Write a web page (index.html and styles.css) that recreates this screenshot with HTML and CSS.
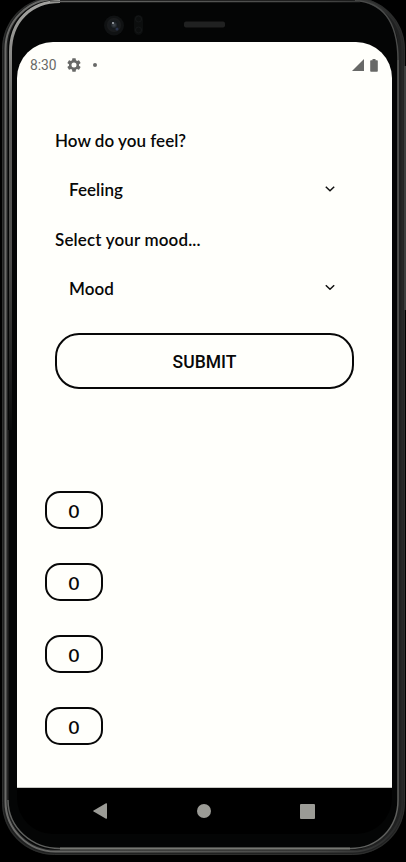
FILE: index.html
```html
<!DOCTYPE html>
<html lang="en">
<head>
<meta charset="utf-8">
<title>Mood</title>
<link rel="stylesheet" href="styles.css">
</head>
<body>
<div class="device">
  <svg class="frame" width="406" height="862" viewBox="0 0 406 862" fill="none">
    <defs>
      <linearGradient id="side" x1="0" y1="0" x2="0" y2="430" gradientUnits="userSpaceOnUse">
        <stop offset="0" stop-color="#a5a5a2"/><stop offset=".12" stop-color="#8c8c89"/><stop offset=".28" stop-color="#5c5c5a"/><stop offset=".6" stop-color="#4c4c4a"/><stop offset="1" stop-color="#080909"/>
      </linearGradient>
      <linearGradient id="rim" x1="0" y1="0" x2="406" y2="0" gradientUnits="userSpaceOnUse">
        <stop offset="0" stop-color="#6c6c6a"/><stop offset=".25" stop-color="#626361"/><stop offset=".8" stop-color="#444544"/><stop offset="1" stop-color="#262727"/>
      </linearGradient>
      <radialGradient id="lens"><stop offset="0" stop-color="#454c53"/><stop offset=".5" stop-color="#15191d"/><stop offset="1" stop-color="#1b1c1d"/></radialGradient>
    </defs>
    <rect x="2" y="-3" width="403" height="858" rx="52" fill="#202121"/>
    <rect x="2.500" y="-2.500" width="402" height="857" rx="52" stroke="#2e2f2e"/>
    <rect x="5.500" y="-1" width="397" height="852.500" rx="50" stroke="url(#rim)" stroke-width="2"/>
    <rect x="8" y=".5" width="390" height="849" rx="47" fill="#040505"/>
    <path d="M398 60V800C398 828 378 848.500 350 848.500H60C32 848.500 8 828 8 800" stroke="#5f605e" stroke-width="1.500"/>
    <path d="M8 800V430" stroke="#2c2d2c"/>
    <path d="M355 .8C381 1.500 398 20 398 60" stroke="#4a4b4a" stroke-width="1.500"/>
    <path d="M10.500 430V52C10.500 21 31 1.500 60 1.500" stroke="url(#side)" stroke-width="3"/>
    <path d="M50 1.500H360" stroke="url(#rim)" stroke-width="1.500"/>
    <path d="M60 848.500H350" stroke="#777873" stroke-width="2"/>
    <path d="M405 66V310" stroke="#3d3f3e" stroke-width="2"/>
    <circle cx="114" cy="25.500" r="10" fill="#101213"/>
    <circle cx="114" cy="25" r="7" fill="url(#lens)"/>
    <circle cx="113" cy="23" r="1" fill="#abb1b7"/>
    <circle cx="117" cy="29" r="1.500" fill="#29334d"/>
    <rect x="134" y="15" width="9" height="20" rx="4.500" fill="#0c0e0e"/>
    <circle cx="138.500" cy="19" r="3" stroke="#151718"/>
    <circle cx="138.500" cy="30" r="3" stroke="#151718"/>
    <rect x="184" y="21.500" width="41" height="6" rx="2" fill="#202121"/>
  </svg>

  <main class="screen">
    <header class="status">
      <span class="time">8:30</span>
      <svg class="gear" width="14" height="14" viewBox="2 2 20 20"><path fill="#686967" fill-rule="evenodd" d="M19.140 12.940c.04-.3.060-.61.060-.94s-.02-.64-.07-.94l2.030-1.580a.49.49 0 0 0 .12-.61l-1.920-3.320a.49.49 0 0 0-.59-.22l-2.390.96a7 7 0 0 0-1.620-.94l-.36-2.540A.48.48 0 0 0 13.920 2.400h-3.840a.48.48 0 0 0-.48.41l-.36 2.540a7 7 0 0 0-1.620.94l-2.390-.96a.49.49 0 0 0-.59.22L2.720 8.870a.48.48 0 0 0 .12.610l2.030 1.580a7 7 0 0 0 0 1.880l-2.030 1.580a.49.49 0 0 0-.12.610l1.920 3.320c.12.220.37.290.59.220l2.390-.96a7 7 0 0 0 1.620.94l.36 2.540c.05.240.24.410.48.410h3.840c.24 0 .44-.17.480-.41l.36-2.540a7 7 0 0 0 1.620-.94l2.390.96c.22.080.47 0 .59-.22l1.920-3.320a.48.48 0 0 0-.12-.61zM12 15.600a3.600 3.600 0 1 1 0-7.200 3.600 3.600 0 0 1 0 7.200z"/></svg>
      <i class="dot"></i>
      <svg class="signal" width="12" height="12" viewBox="0 0 12 12"><path fill="#686967" d="M0 12 12 0V12z"/></svg>
      <svg class="battery" width="8" height="13" viewBox="0 0 8 13"><path fill="#686967" d="M2.500 0h3v1.200H7a.8.8 0 0 1 .8.800V12a.8.8 0 0 1-.8.800H1a.8.8 0 0 1-.8-.8V2a.8.8 0 0 1 .8-.8h1.500z"/></svg>
    </header>

    <section class="form">
      <div class="label">How do you feel?</div>
      <div class="select"><span>Feeling</span><svg width="10" height="6" viewBox="0 0 10 6"><path d="M.8.700 5 4.700 9.200.7" fill="none" stroke="#111" stroke-width="1.500"/></svg></div>
      <div class="label wide">Select your mood...</div>
      <div class="select"><span>Mood</span><svg width="10" height="6" viewBox="0 0 10 6"><path d="M.8.700 5 4.700 9.200.7" fill="none" stroke="#111" stroke-width="1.500"/></svg></div>
      <button class="submit">SUBMIT</button>
    </section>

    <section class="counts">
      <div class="count"><span>0</span></div>
      <div class="count"><span>0</span></div>
      <div class="count"><span>0</span></div>
      <div class="count"><span>0</span></div>
    </section>
  </main>

  <nav class="nav">
    <svg width="14" height="16" viewBox="0 0 14 16"><path fill="#9b9b96" d="M13 .3q1-.5 1 .6v14.200q0 1.100-1 .6L.6 8.600q-.9-.6 0-1.200z"/></svg>
    <i class="home"></i>
    <i class="recent"></i>
  </nav>
</div>
</body>
</html>
```
FILE: styles.css
```css
* { box-sizing: border-box; }
body { margin: 0; background: #000; overflow: hidden; }
.device { position: relative; width: 406px; height: 862px; padding: 42px 14px 0 17px; }
.frame { position: absolute; left: 0; top: 0; }
.screen {
  position: relative;
  width: 375px;
  height: 746px;
  background: #fffffb;
  border-radius: 36px 36px 0 0;
  border-bottom: 1px solid #c8c8c4;
  color: #080808;
}
.status { display: flex; align-items: center; height: 46px; padding: 0 14px 0 13px; }
.time { width: 37px; font: 400 13.8px/16px Roboto, sans-serif; color: #686967; }
.gear { flex: none; }
.dot { width: 4px; height: 4px; margin-left: 12px; border-radius: 50%; background: #686967; }
.signal { margin-left: auto; margin-right: 6px; }
.form { display: flex; flex-direction: column; padding: 36px 38px 0; font: 600 17px/34px Lato, sans-serif; letter-spacing: 0.03px; }
.label { height: 34px; white-space: nowrap; }
.label.wide { letter-spacing: 0.15px; }
.select { display: flex; align-items: center; justify-content: space-between; height: 64px; padding: 0 19px 0 14px; }
.select svg { margin-bottom: 2px; }
.label.wide, .label.wide + .select { transform: translateY(0.5px); }
.submit {
  width: 299px;
  height: 56px;
  margin-top: 13px;
  padding: 2px 0 0;
  border: 2px solid #080808;
  border-radius: 24px;
  background: transparent;
  color: #080808;
  font: 500 17.5px/20px Roboto, sans-serif;
}
.counts { display: flex; flex-direction: column; gap: 34px; padding: 102px 28px 0; }
.count {
  display: flex;
  align-items: center;
  justify-content: center;
  width: 58px;
  height: 38px;
  padding-top: 3px;
  border: 2px solid #080808;
  border-radius: 15px;
  font: 600 17px/20px Lato, sans-serif;
}
.count span { transform: scale(1.1, 0.98); }
.nav { position: relative; display: flex; align-items: center; width: 375px; height: 46px; padding-left: 76px; border-radius: 0 0 36px 36px; background: #000; }
.home { width: 14px; height: 14px; margin-left: 90px; border-radius: 50%; background: #9b9b96; }
.recent { width: 15px; height: 15px; margin-left: 89px; border-radius: 1px; background: #9b9b96; }
```
